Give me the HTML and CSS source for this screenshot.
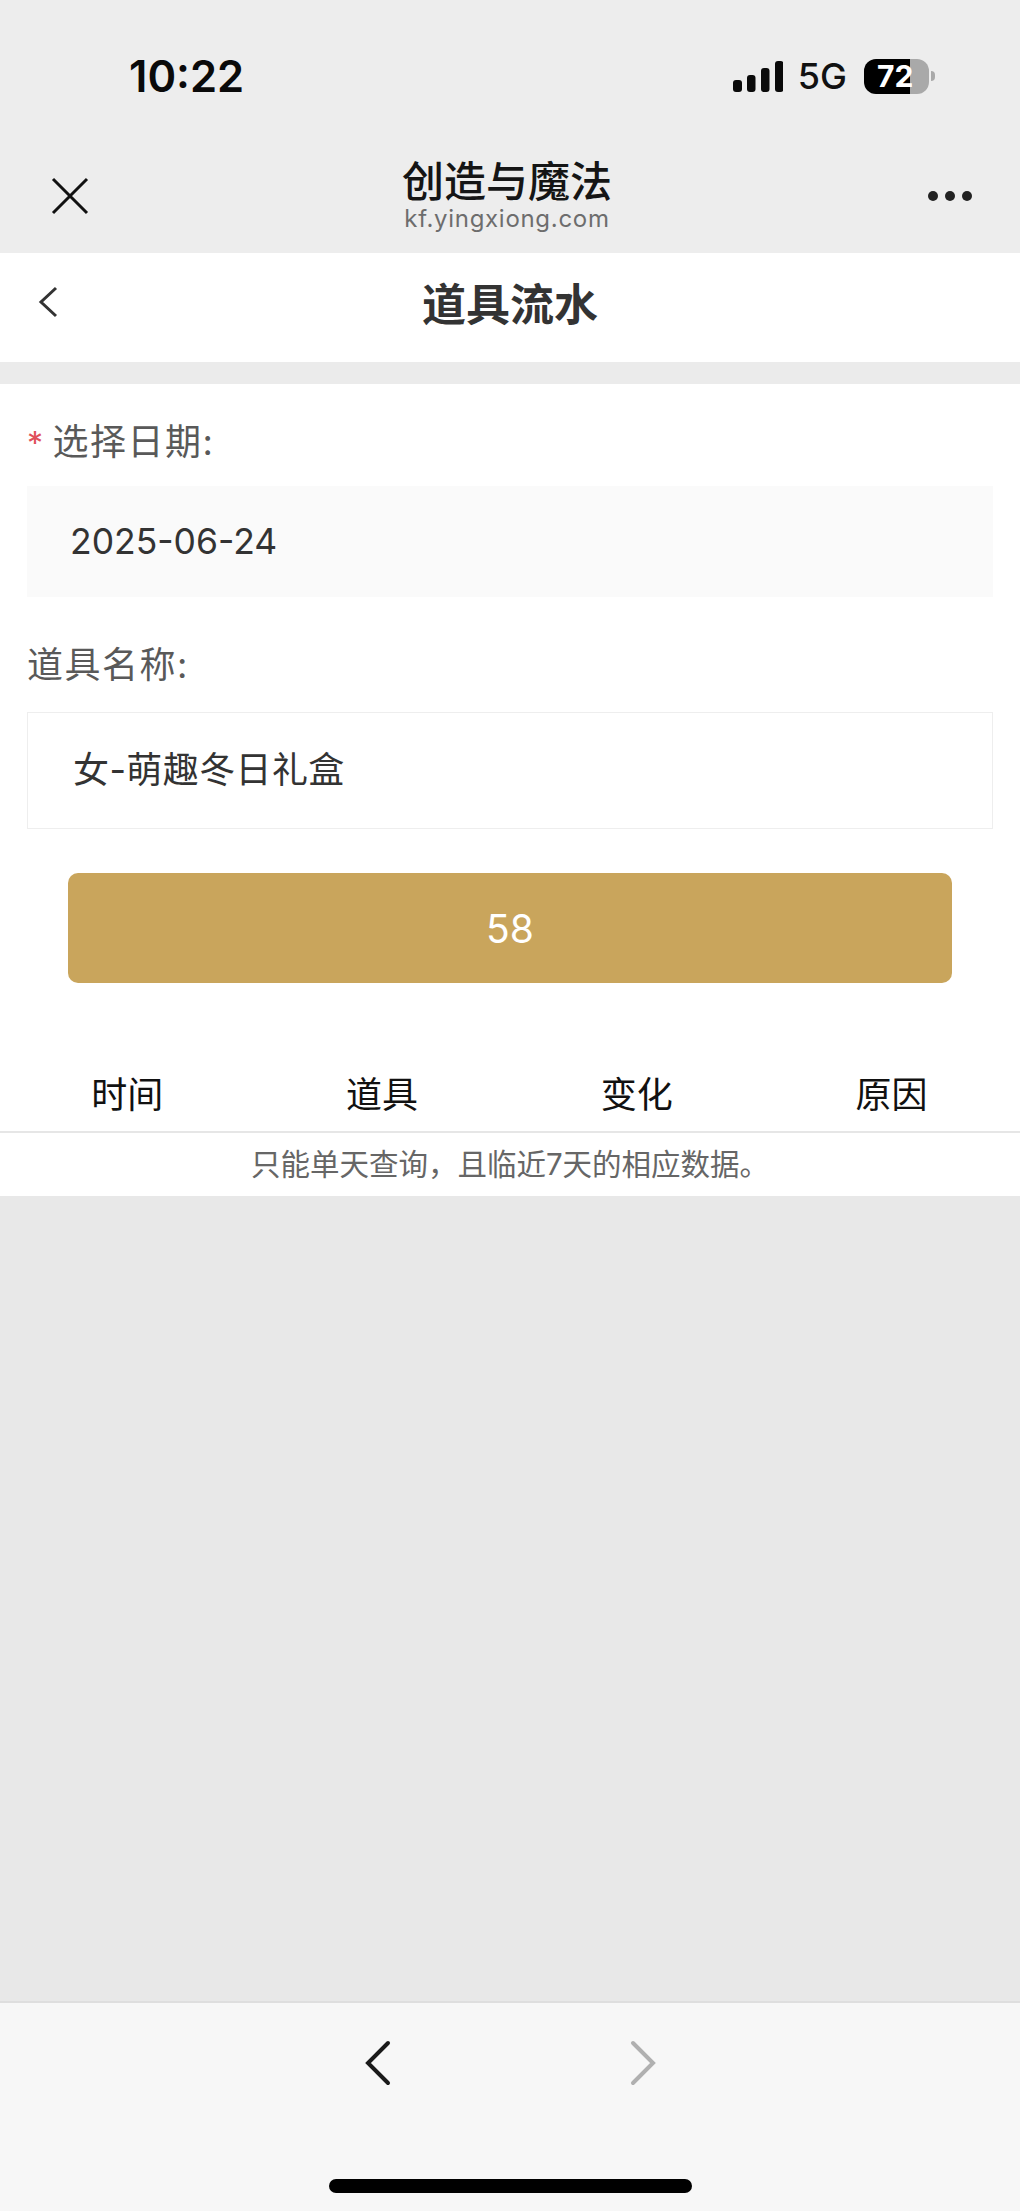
FILE: index.html
```html
<!DOCTYPE html>
<html lang="zh-CN">
<head>
    <meta charset="UTF-8">
    <meta name="viewport" content="width=device-width, initial-scale=1.0">
    <title>道具流水</title>
    <link rel="stylesheet" href="styles.css">
</head>
<body>
    <div class="phone">
        <header class="wx-header">
            <div class="status-bar">
                <span class="clock">10:22</span>
                <div class="status-icons">
                    <svg class="signal" width="50" height="31" viewBox="0 0 50 31">
                        <rect x="0" y="19" width="9" height="12" rx="3"/>
                        <rect x="14" y="14" width="8.500" height="17" rx="3"/>
                        <rect x="28" y="7" width="8.500" height="24" rx="3"/>
                        <rect x="42" y="0" width="8.500" height="31" rx="3"/>
                    </svg>
                    <span class="network">5G</span>
                    <div class="battery"><span class="battery-level">72</span></div>
                    <span class="battery-tip"></span>
                </div>
            </div>
            <div class="nav-bar">
                <svg class="nav-close" width="38" height="38" viewBox="0 0 38 38">
                    <path d="M2 2 L36 36 M36 2 L2 36"/>
                </svg>
                <div class="nav-title">
                    <div class="nav-name">创造与魔法</div>
                    <div class="nav-url">kf.yingxiong.com</div>
                </div>
                <div class="nav-more"><i></i><i></i><i></i></div>
            </div>
        </header>

        <div class="page-head">
            <svg class="page-back" width="20" height="32" viewBox="0 0 20 32">
                <path d="M18 2 L3 16 L18 30"/>
            </svg>
            <h1>道具流水</h1>
        </div>
        <div class="band"></div>

        <form class="query-form">
            <label class="field-label"><span class="required">*</span>选择日期:</label>
            <div class="field field-date">2025-06-24</div>
            <label class="field-label field-label-name">道具名称:</label>
            <div class="field field-name">女-萌趣冬日礼盒</div>
            <button class="submit-btn" type="button">58</button>
        </form>

        <div class="table-head">
            <span>时间</span>
            <span>道具</span>
            <span>变化</span>
            <span>原因</span>
        </div>
        <p class="note">只能单天查询&#xFF0C;且临近7天的相应数据。</p>

        <div class="empty"></div>

        <footer class="wx-footer">
            <div class="footer-nav">
                <svg class="arrow-back" width="26" height="46" viewBox="0 0 26 46">
                    <path d="M23 3 L3 23 L23 43"/>
                </svg>
                <svg class="arrow-next" width="26" height="46" viewBox="0 0 26 46">
                    <path d="M3 3 L23 23 L3 43"/>
                </svg>
            </div>
            <div class="home-bar"></div>
        </footer>
    </div>
</body>
</html>
```

FILE: styles.css
```css
* {
    box-sizing: border-box;
    margin: 0;
    padding: 0;
}

body {
    background-color: #fff;
    font-family: "Inter", "Noto Sans CJK SC", sans-serif;
    overflow: hidden;
}

.phone {
    display: flex;
    flex-direction: column;
    height: 2211px;
}

/* wechat header */
.wx-header {
    height: 253px;
    background-color: #ededed;
}

.status-bar {
    display: flex;
    justify-content: space-between;
    align-items: center;
    height: 152px;
    padding: 0 85px 0 129px;
}

.clock {
    font-size: 43.500px;
    font-weight: 600;
    color: #0a0a0a;
}

.status-icons {
    display: flex;
    align-items: center;
}

.signal {
    fill: #0a0a0a;
    margin-right: 15px;
}

.network {
    font-size: 36px;
    font-weight: 500;
    color: #111;
    margin-right: 17px;
}

.battery {
    width: 65px;
    height: 35px;
    border-radius: 12px;
    background: linear-gradient(to right, #000 46px, #a9a9a9 46px);
    padding-left: 13px;
}

.battery-level {
    font-size: 30px;
    line-height: 35px;
    font-weight: 700;
    color: #fff;
}

.battery-tip {
    width: 4px;
    height: 10px;
    margin-left: 2px;
    border-radius: 0 4px 4px 0;
    background-color: #a9a9a9;
}

.nav-bar {
    display: flex;
    justify-content: space-between;
    align-items: center;
    padding: 0 48px 0 51px;
    height: 101px;
}

.nav-close {
    stroke: #111;
    stroke-width: 3;
    fill: none;
    margin-top: -14px;
}

.nav-title {
    text-align: center;
    margin-left: -3px;
    margin-top: -11px;
}

.nav-name {
    font-size: 42px;
    line-height: 44px;
    font-weight: 500;
    color: #151515;
}

.nav-url {
    font-size: 24px;
    line-height: 30px;
    letter-spacing: 0.7px;
    color: #6d6d6d;
}

.nav-more {
    display: flex;
    gap: 7px;
    margin-top: -14px;
}

.nav-more i {
    width: 10px;
    height: 10px;
    border-radius: 50%;
    background-color: #222;
}

/* page title */
.page-head {
    display: grid;
    grid-template-columns: 1fr auto 1fr;
    align-items: center;
    height: 109px;
    padding: 0 38px;
    background-color: #fff;
}

.page-back {
    stroke: #333;
    stroke-width: 3;
    fill: none;
    margin-top: -12px;
}

h1 {
    font-size: 44px;
    line-height: 60px;
    font-weight: 700;
    color: #333;
    margin-top: -6px;
}

.band {
    height: 22px;
    background-color: #ebebeb;
}

/* form */
.query-form {
    display: flex;
    flex-direction: column;
    padding: 32px 27px 0 27px;
}

.field-label {
    font-size: 36px;
    line-height: 52px;
    letter-spacing: 1.500px;
    color: #595959;
    margin-bottom: 16px;
}

.field-label-name {
    margin-bottom: 21px;
}

.required {
    color: #e0505a;
    margin-right: 8px;
    font-size: 32px;
}

.field {
    font-size: 36px;
    color: #333;
    display: flex;
    align-items: center;
}

.field-date {
    height: 111px;
    padding-left: 43px;
    font-size: 35.500px;
    background-color: #fafafa;
    margin-bottom: 42px;
}

.field-name {
    height: 117px;
    padding: 0 0 7px 45px;
    letter-spacing: 0.400px;
    border: 1px solid #eee;
    background-color: #fff;
}

.submit-btn {
    height: 110px;
    margin: 44px 41px 0 41px;
    border: none;
    border-radius: 10px;
    background-color: #c9a55c;
    color: #fff;
    font-family: inherit;
    font-size: 39px;
}

/* table */
.table-head {
    display: grid;
    grid-template-columns: repeat(4, 1fr);
    align-items: center;
    height: 150px;
    padding: 70px 1px 0 0;
    text-align: center;
    font-size: 36px;
    color: #111;
    border-bottom: 2px solid #e6e6e6;
}

.note {
    height: 63px;
    line-height: 63px;
    text-align: center;
    font-size: 29.500px;
    color: #666;
    background-color: #fff;
}

.empty {
    flex: 1;
    background-color: #e8e8e8;
}

/* bottom toolbar */
.wx-footer {
    height: 210px;
    border-top: 2px solid #dedede;
    background-color: #f7f7f7;
}

.footer-nav {
    display: flex;
    justify-content: center;
    gap: 239px;
    padding-top: 37px;
}

.footer-nav svg {
    fill: none;
    stroke-width: 4;
    stroke-linecap: round;
}

.arrow-back {
    stroke: #1a1a1a;
}

.arrow-next {
    stroke: #b0b0b0;
}

.home-bar {
    width: 363px;
    height: 14px;
    margin: 93px auto 0 auto;
    border-radius: 7px;
    background-color: #000;
}
```
